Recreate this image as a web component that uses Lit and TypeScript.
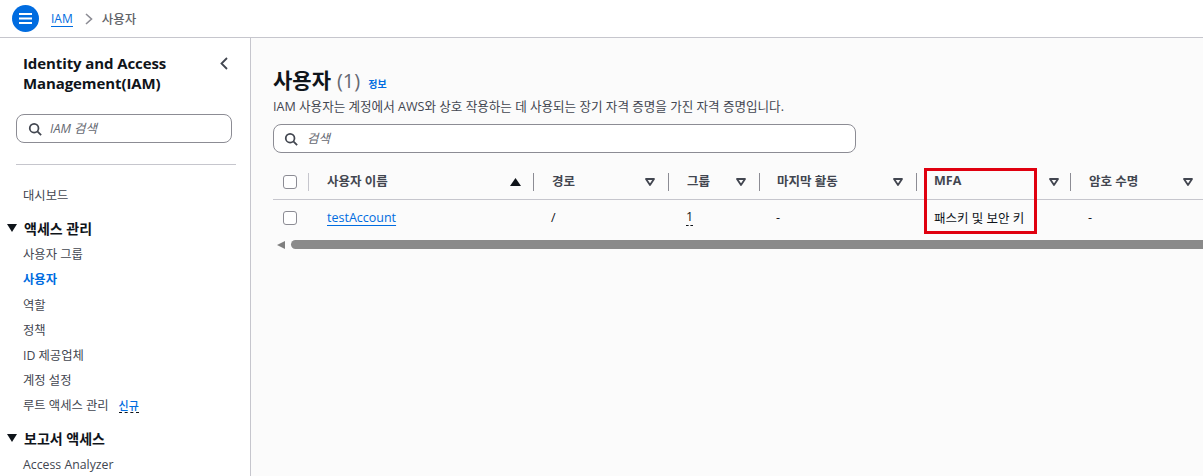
import { LitElement, html, css, svg } from "lit";
import { customElement } from "lit/decorators.js";

const search = svg`<svg class="sicon" width="16" height="16" viewBox="0 0 16 16" fill="none" stroke="#424650" stroke-width="2"><circle cx="7" cy="7" r="5"/><path d="M10.7 10.7 15 15"/></svg>`;
const sortDown = svg`<svg width="10" height="8" viewBox="0 0 10 8"><path d="M1 1h8L5 7z" fill="none" stroke="#424650" stroke-width="1.8" stroke-linejoin="round"/></svg>`;
const sortUp = svg`<svg width="11" height="8" viewBox="0 0 11 8"><path d="M5.5 0 11 8H0z" fill="#0f141a"/></svg>`;
const caret = svg`<svg class="caret" width="10" height="8" viewBox="0 0 10 8"><path d="M0 0h10L5 8z" fill="#0f141a"/></svg>`;

const cols = [
  { w: 225, head: "사용자 이름", cell: "testAccount", link: true, up: true },
  { w: 135, head: "경로", cell: "/" },
  { w: 91, head: "그룹", cell: "1", dashed: true },
  { w: 157, head: "마지막 활동", cell: "-" },
  { w: 154, head: "MFA", cell: "패스키 및 보안 키" },
  { w: 133, head: "암호 수명", cell: "-" },
];

@customElement("app-root")
export class AppRoot extends LitElement {
  static styles = css`
    :host { display: block; width: 1203px; height: 476px; overflow: hidden; background: #fff;
      font-family: "Open Sans", "Noto Sans CJK KR", sans-serif; font-size: 12.5px; color: #0f141a; }
    .top { height: 37px; border-bottom: 1px solid #c6c6cd; display: flex; align-items: center; padding-left: 12px; box-sizing: content-box; }
    .menu { width: 27px; height: 27px; border-radius: 50%; background: #006ce0; display: flex; align-items: center; justify-content: center; }
    .crumb { margin-left: 12px; color: #006ce0; border-bottom: 1px solid #006ce0; line-height: 15px; font-size: 12px; }
    .chev { margin: 0 9px 0 12px; display: block; }
    .cur { color: #5f6368; font-weight: 500; }
    .body { display: flex; height: 438px; }
    .side { width: 251px; flex: none; border-right: 1px solid #c6c6cd; padding: 17px 14px 0 16px; box-sizing: border-box; overflow: hidden; }
    .title { display: flex; justify-content: space-between; padding-left: 7px; height: 52px; }
    .title h2 { margin: -2px 0 0; font-size: 15px; line-height: 20px; font-weight: 700; width: 180px; letter-spacing: -0.1px; }
    .back { margin: 2px 8px 0 0; display: block; }
    .sbox { height: 29px; border: 1px solid #8c8c94; border-radius: 8px; display: flex; align-items: center; box-sizing: border-box; background: #fff; padding-left: 11px; gap: 8px; color: #656871; font-style: italic; }
    .sbox span { margin-top: -2px; }
    .sbox .sicon { flex: none; width: 14px; height: 14px; }
    .side .sbox { margin-top: 7px; width: 216px; }
    .sep { width: 220px; border-top: 1px solid #c6c6cd; margin-top: 21px; }
    .nav { padding-top: 18px; color: #424650; }
    .item { height: 25.2px; line-height: 25.2px; padding-left: 7px; white-space: nowrap; font-size: 12.3px; }
    .item.active { color: #006ce0; font-weight: 700; }
    .group { display: flex; align-items: center; font-weight: 700; font-size: 14px; color: #0f141a; height: 29px; margin-top: 5px; margin-left: -11px; }
    .group.last { height: 28px; }
    .caret { margin: 0 7px 0 2px; }
    .new { margin-left: 10px; color: #006ce0; font-size: 11px; font-weight: 500; border-bottom: 1px dashed #0f141a; line-height: 13px; display: inline-block; }
    .main { flex: 1; background: #fbfbfb; padding: 28px 0 0 22px; min-width: 0; position: relative; overflow: hidden; }
    .h { display: flex; align-items: baseline; height: 29px; }
    .h h1 { margin: 0; font-size: 21px; font-weight: 700; line-height: 29px; }
    .cnt { font-size: 20px; color: #656871; margin-left: 6px; font-weight: 400; }
    .info { color: #006ce0; font-size: 10px; font-weight: 700; margin-left: 8px; }
    .desc { color: #424650; line-height: 18px; margin-top: 3px; font-size: 12.57px; white-space: nowrap; }
    .main .sbox { width: 583px; margin-top: 8px; padding-left: 10px; gap: 9px; }
    .table { margin-top: 12px; width: 930px; }
    .row { display: flex; align-items: center; }
    .row.head { height: 34px; border-bottom: 1px solid #c6c6cd; font-weight: 700; color: #424650; }
    .row.data { height: 35px; }
    .sel { width: 35px; flex: none; display: flex; align-items: center; height: 100%; box-sizing: border-box; padding-left: 10px; }
    .box { width: 14px; height: 14px; border: 1px solid #8c8c94; border-radius: 3px; background: #fff; box-sizing: border-box; }
    .c { flex: none; box-sizing: border-box; padding-left: 18px; display: flex; align-items: center; justify-content: space-between; padding-right: 13px; white-space: nowrap; height: 17px; }
    .c:nth-child(2) { padding-right: 12px; }
    .data .c:nth-child(2) { padding-left: 19px; }
    .c:nth-child(5) { padding-left: 17px; }
    .head .c { border-left: 1px solid #8c8c94; height: 18px; }
    .head .c span { margin-top: -3px; }
    .head .c:nth-child(2) { border-left-color: #c6c6cd; }
    .head .c:nth-child(6) { padding-left: 17px; padding-right: 11px; }
    .head .c:last-child { padding-right: 10px; }
    .link { color: #006ce0; text-decoration: underline; text-underline-offset: 3px; }
    .dash { border-bottom: 1px dashed #0f141a; line-height: 16px; }
    .scroll { display: flex; align-items: center; margin: 5px 0 0 4px; height: 9px; width: 926px; }
    .arrow { width: 0; height: 0; border-style: solid; border-width: 4.5px 8px 4.5px 0; border-color: transparent #7f7f7f transparent transparent; margin-right: 6px; }
    .thumb { flex: 1; height: 9px; border-radius: 4.5px 0 0 4.5px; background: #8a8a8a; }
    .red { position: absolute; left: 673px; top: 130px; width: 113px; height: 66px; border: 3px solid #e0000f; box-sizing: border-box; }
  `;

  render() {
    return html`
      <div class="top">
        <div class="menu"><svg width="15" height="13" viewBox="0 0 15 13" stroke="#fff" stroke-width="2"><path d="M1 2h13M1 6.5h13M1 11h13"/></svg></div>
        <span class="crumb">IAM</span>
        <svg class="chev" width="8" height="12" viewBox="0 0 8 12" fill="none" stroke="#8c8c94" stroke-width="1.6"><path d="M1 1l5.5 5L1 11"/></svg>
        <span class="cur">사용자</span>
      </div>
      <div class="body">
        <aside class="side">
          <div class="title">
            <h2>Identity and Access Management(IAM)</h2>
            <svg class="back" width="8" height="13" viewBox="0 0 8 13" fill="none" stroke="#424650" stroke-width="1.8"><path d="M7 1 1.5 6.5 7 12"/></svg>
          </div>
          <div class="sbox">${search}<span>IAM 검색</span></div>
          <div class="sep"></div>
          <nav class="nav">
            <div class="item">대시보드</div>
            <div class="group">${caret}액세스 관리</div>
            <div class="item">사용자 그룹</div>
            <div class="item active">사용자</div>
            <div class="item">역할</div>
            <div class="item">정책</div>
            <div class="item">ID 제공업체</div>
            <div class="item">계정 설정</div>
            <div class="item">루트 액세스 관리<span class="new">신규</span></div>
            <div class="group last">${caret}보고서 액세스</div>
            <div class="item">Access Analyzer</div>
          </nav>
        </aside>
        <main class="main">
          <div class="h"><h1>사용자</h1><span class="cnt">(1)</span><span class="info">정보</span></div>
          <div class="desc">IAM 사용자는 계정에서 AWS와 상호 작용하는 데 사용되는 장기 자격 증명을 가진 자격 증명입니다.</div>
          <div class="sbox">${search}<span>검색</span></div>
          <div class="table">
            <div class="row head">
              <div class="sel"><span class="box"></span></div>
              ${cols.map((c) => html`<div class="c" style="width:${c.w}px"><span>${c.head}</span>${c.up ? sortUp : sortDown}</div>`)}
            </div>
            <div class="row data">
              <div class="sel"><span class="box"></span></div>
              ${cols.map((c) => html`<div class="c" style="width:${c.w}px"><span class="${c.link ? "link" : c.dashed ? "dash" : ""}">${c.cell}</span></div>`)}
            </div>
            <div class="scroll"><span class="arrow"></span><span class="thumb"></span></div>
          </div>
          <div class="red"></div>
        </main>
      </div>
    `;
  }
}
